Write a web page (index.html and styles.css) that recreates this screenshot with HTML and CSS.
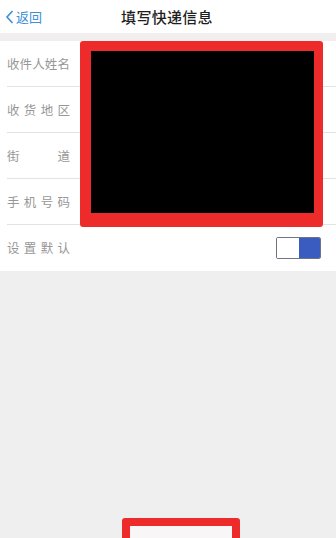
FILE: index.html
```html
<!DOCTYPE html>
<html lang="zh">
<head>
<meta charset="utf-8">
<link rel="stylesheet" href="styles.css">
</head>
<body>
<div class="page">
  <header class="nav">
    <div class="back">
      <svg class="chev" width="9" height="14" viewBox="0 0 9 14"><path d="M7.5 1 L2 7 L7.5 13" fill="none" stroke="#3d8fd6" stroke-width="1.6"/></svg>
      <span>返回</span>
    </div>
    <div class="title">填写快递信息</div>
  </header>
  <div class="gap"></div>
  <section class="form">
    <div class="row"><span class="label">收件人姓名</span></div>
    <div class="row"><span class="label">收货地区</span></div>
    <div class="row"><span class="label">街道</span></div>
    <div class="row"><span class="label">手机号码</span></div>
    <div class="row last"><span class="label">设置默认</span><span class="toggle"><i class="off"></i><i class="on"></i></span></div>
    <div class="redact"></div>
  </section>
  <div class="bottom-mark"></div>
</div>
</body>
</html>
```

FILE: styles.css
```css
html, body { margin: 0; padding: 0; }
body {
  width: 336px;
  height: 538px;
  overflow: hidden;
  background: #efefef;
  font-family: "Noto Sans CJK SC", "Noto Sans", sans-serif;
}
.page { position: relative; width: 336px; height: 538px; }
.nav {
  position: relative;
  height: 33px;
  background: #fff;
  display: flex;
  align-items: center;
  justify-content: center;
}
.back {
  position: absolute;
  left: 5px;
  top: 0;
  height: 33px;
  display: flex;
  align-items: center;
  gap: 2px;
  color: #3d8fd6;
  font-size: 13px;
}
.chev { display: block; margin-top: 1px; }
.title {
  font-size: 15px;
  font-weight: 500;
  color: #1e1e1e;
  letter-spacing: 0.3px;
  margin-left: -2px;
}
.gap { height: 8px; background: #f1eeef; }
.form {
  position: relative;
  background: #fff;
}
.row {
  height: 45px;
  margin-left: 7px;
  border-bottom: 1px solid #e3e3e3;
  display: flex;
  align-items: center;
  justify-content: space-between;
  padding-right: 15px;
}
.row.last { border-bottom: none; height: 46px; }
.label {
  width: 63px;
  font-size: 12.5px;
  color: #979797;
  text-align: justify;
  text-align-last: justify;
  white-space: nowrap;
  line-height: 1;
  padding-top: 1px;
}
.toggle {
  display: flex;
  width: 45px;
  height: 22px;
  box-sizing: border-box;
  border: 1px solid #6f7480;
  border-radius: 2px;
  overflow: hidden;
}
.toggle .off { flex: 1; background: #fff; }
.toggle .on { flex: 1; background: #3a5cc0; }
.redact {
  position: absolute;
  left: 80px;
  top: 0;
  width: 243px;
  height: 186px;
  box-sizing: border-box;
  background: #000;
  border-style: solid;
  border-color: #ee2b2b;
  border-width: 10px 9px 14px 11px;
  border-radius: 3px;
}
.bottom-mark {
  position: absolute;
  left: 122px;
  top: 518px;
  width: 118px;
  height: 40px;
  box-sizing: border-box;
  background: #f8f6f6;
  border: 8px solid #ee2b2b;
  border-radius: 3px;
}
```
